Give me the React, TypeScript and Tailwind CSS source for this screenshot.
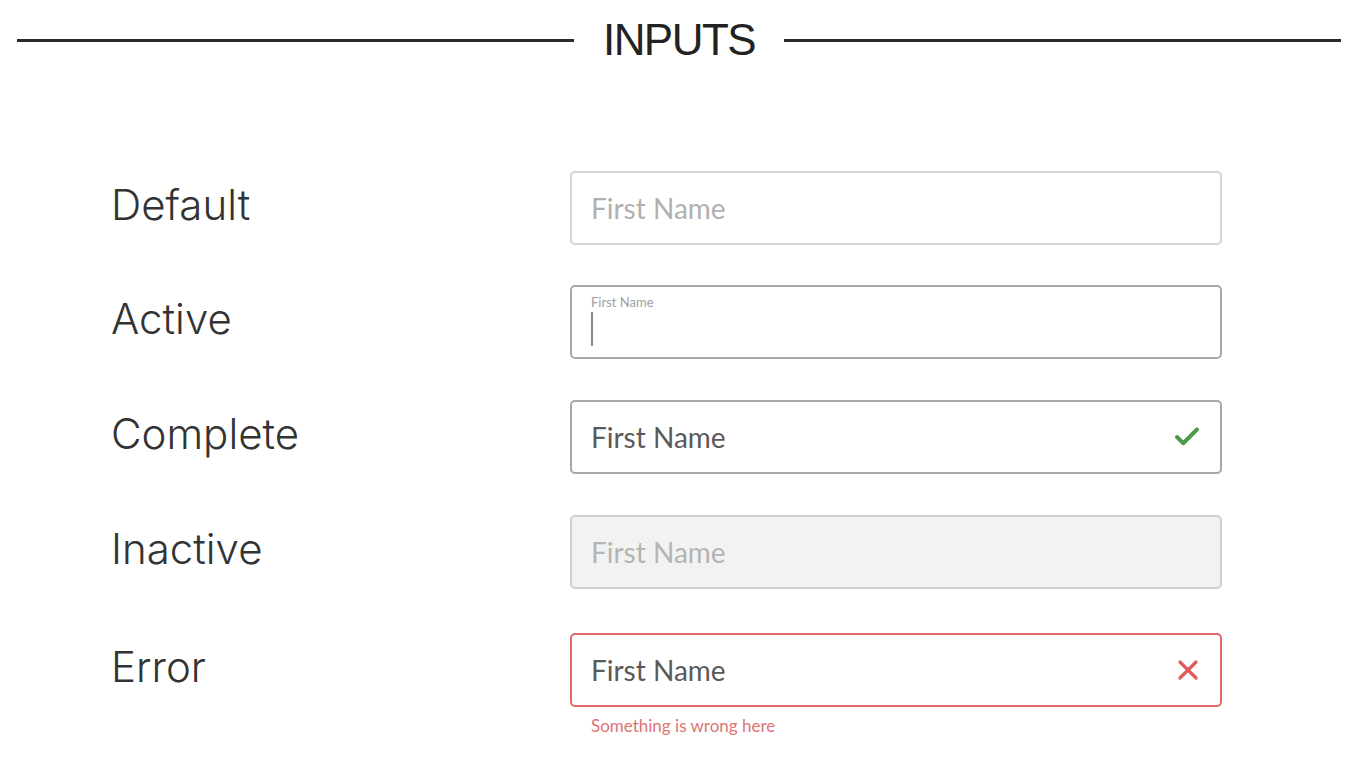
import { Check, X } from "lucide-react";

const label = "w-[459px] shrink-0 pb-[6px] text-[42px] font-light leading-none text-[#333] [font-family:Inter,'Liberation_Sans',sans-serif]";
const field = "flex h-[74px] w-[652px] items-center rounded-[5px] border-2 px-[19px] [font-family:Lato,'Open_Sans',sans-serif]";

function Row({ name, className, children }: { name: string; className: string; children: React.ReactNode }) {
  return (
    <div className={`flex items-center ${className}`}>
      <div className={label}>{name}</div>
      {children}
    </div>
  );
}

export default function App() {
  return (
    <div className="min-h-[760px] w-full bg-white">
      {/* Section header */}
      <div className="flex items-center gap-[29px] pl-[17px] pr-[25px] pt-[16px]">
        <div className="h-[3px] flex-1 bg-[#2a2a2a]" />
        <h1 className="text-[44px] leading-[48px] tracking-[-0.035em] text-[#222] [font-family:'Liberation_Sans',sans-serif]">
          INPUTS
        </h1>
        <div className="h-[3px] flex-1 bg-[#2a2a2a]" />
      </div>

      <div className="flex flex-col pl-[111px]">
        <Row name="Default" className="mt-[107px]">
          <div className={`${field} border-[#d4d4d4] bg-white`}>
            <span className="text-[28px] text-[#b0b0b0]">First Name</span>
          </div>
        </Row>

        <Row name="Active" className="mt-[40px]">
          <div className={`${field} flex-col items-start justify-start border-[#a8a8a8] bg-white pt-[8px]`}>
            <span className="text-[13px] leading-[14px] text-[#a0a0a0]">First Name</span>
            <span className="mt-[3px] h-[34px] w-[2px] bg-[#8a8a8a]" />
          </div>
        </Row>

        <Row name="Complete" className="mt-[41px]">
          <div className={`${field} justify-between border-[#a8a8a8] bg-white pr-[18px]`}>
            <span className="text-[28px] text-[#5a5a5a]">First Name</span>
            <Check className="h-[30px] w-[30px] text-[#4f9a4a]" strokeWidth={3.2} />
          </div>
        </Row>

        <Row name="Inactive" className="mt-[41px]">
          <div className={`${field} border-[#d0d0d0] bg-[#f2f2f2]`}>
            <span className="text-[28px] text-[#b4b4b4]">First Name</span>
          </div>
        </Row>

        <div className="mt-[44px] flex items-start">
          <div className={`${label} flex h-[74px] items-center`}>Error</div>
          <div className="flex flex-col">
            <div className={`${field} justify-between border-[#e06a6a] bg-white pr-[16px]`}>
              <span className="text-[28px] text-[#5a5a5a]">First Name</span>
              <X className="h-[32px] w-[32px] text-[#de5a5a]" strokeWidth={2.4} />
            </div>
            <span className="mt-[10px] pl-[21px] text-[17px] leading-[18px] text-[#e07474] [font-family:Lato,'Open_Sans',sans-serif]">
              Something is wrong here
            </span>
          </div>
        </div>
      </div>
    </div>
  );
}
